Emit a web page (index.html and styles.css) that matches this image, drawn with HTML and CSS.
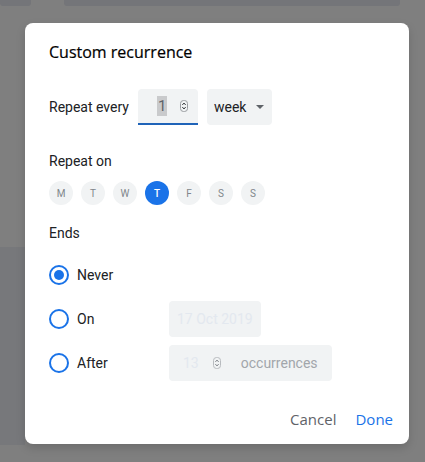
FILE: index.html
```html
<!DOCTYPE html>
<html lang="en">
  <head>
    <meta charset="UTF-8" />
    <meta name="viewport" content="width=device-width, initial-scale=1.0" />
    <title>Custom recurrence</title>
    <link rel="stylesheet" href="styles.css">
  </head>
  <body>
    <div class="topbars">
      <div class="bar bar-left"></div>
      <div class="bar bar-main"></div>
    </div>
    <div class="stage">
      <div class="side">
        <div class="side-block"></div>
      </div>
      <div class="dialog">
        <h2 class="title">Custom recurrence</h2>
        <div class="repeat-row">
          <span class="label">Repeat every</span>
          <div class="num-box">
            <span class="num-value">1</span>
            <svg class="spin" width="8" height="12" viewBox="0 0 8 12">
              <rect x="0.5" y="0.5" width="7" height="11" rx="3" fill="none" stroke="#9a9da1" stroke-width="1" />
              <path d="M2.3 5 L4 3 L5.7 5 M2.3 7 L4 9 L5.7 7" fill="none" stroke="#3c4043" stroke-width="1" />
            </svg>
          </div>
          <div class="select-box">
            <span>week</span>
            <span class="caret"></span>
          </div>
        </div>
        <div class="section-label repeat-on">Repeat on</div>
        <div class="days">
          <span class="day">M</span>
          <span class="day">T</span>
          <span class="day">W</span>
          <span class="day day-on">T</span>
          <span class="day">F</span>
          <span class="day">S</span>
          <span class="day">S</span>
        </div>
        <div class="section-label ends">Ends</div>
        <div class="end-options">
          <div class="end-row">
            <div class="radio-wrap">
              <svg width="20" height="20" viewBox="0 0 20 20">
                <circle cx="10" cy="10" r="9" fill="none" stroke="#1a73e8" stroke-width="2" />
                <circle cx="10" cy="10" r="5" fill="#1a73e8" />
              </svg>
              <span class="label">Never</span>
            </div>
          </div>
          <div class="end-row">
            <div class="radio-wrap">
              <svg width="20" height="20" viewBox="0 0 20 20">
                <circle cx="10" cy="10" r="9" fill="none" stroke="#1a73e8" stroke-width="2" />
              </svg>
              <span class="label">On</span>
            </div>
            <div class="field date-field">17 Oct 2019</div>
          </div>
          <div class="end-row">
            <div class="radio-wrap">
              <svg width="20" height="20" viewBox="0 0 20 20">
                <circle cx="10" cy="10" r="9" fill="none" stroke="#1a73e8" stroke-width="2" />
              </svg>
              <span class="label">After</span>
            </div>
            <div class="field count-field">
              <span class="count-value">13</span>
              <svg class="spin" width="8" height="12" viewBox="0 0 8 12">
                <rect x="0.5" y="0.5" width="7" height="11" rx="3" fill="none" stroke="#b8bbbf" stroke-width="1" />
                <path d="M2.3 5 L4 3 L5.7 5 M2.3 7 L4 9 L5.7 7" fill="none" stroke="#8a8e93" stroke-width="1" />
              </svg>
              <span class="count-unit">occurrences</span>
            </div>
          </div>
        </div>
        <div class="actions">
          <button class="btn btn-cancel">Cancel</button>
          <button class="btn btn-done">Done</button>
        </div>
      </div>
    </div>
  </body>
</html>
```
FILE: styles.css
```css
body {
  margin: 0;
  height: 462px;
  overflow: hidden;
  background-color: #7f7f7f;
  font-family: Roboto, "Liberation Sans", sans-serif;
  color: #202124;
}
.topbars {
  display: flex;
  height: 6px;
}
.bar {
  background-color: #747579;
  border-radius: 0 0 3px 3px;
}
.bar-left {
  width: 31px;
}
.bar-main {
  width: 336px;
  margin-left: 33px;
}
.stage {
  display: flex;
}
.side {
  width: 25px;
  padding-top: 241px;
}
.side-block {
  height: 198px;
  background-color: #77787b;
}
.dialog {
  width: 384px;
  height: 421px;
  box-sizing: border-box;
  margin-top: 17px;
  padding: 17px 24px 7px;
  background-color: #fff;
  border-radius: 8px;
  box-shadow: 0 4px 10px rgba(0, 0, 0, 0.15);
  display: flex;
  flex-direction: column;
}
.title {
  margin: 0 0 25px;
  font-family: "Open Sans", Roboto, sans-serif;
  font-size: 16px;
  line-height: 24px;
  font-weight: 500;
  color: #000;
  -webkit-text-stroke: 0.2px #000;
}
.label {
  font-size: 14px;
  line-height: 20px;
  color: #202124;
}
.repeat-row {
  display: flex;
  align-items: center;
}
.repeat-row .label {
  margin-right: 9px;
}
.num-box {
  width: 60px;
  height: 36px;
  box-sizing: border-box;
  padding-left: 19px;
  display: flex;
  align-items: center;
  background-color: #f1f3f4;
  border-bottom: 2px solid #1f63b8;
  border-radius: 4px 4px 0 0;
}
.num-value {
  font-size: 15px;
  line-height: 20px;
  padding: 0 1px;
  background-color: #c9cacc;
  color: #5f6368;
}
.num-box .spin {
  margin-left: 13px;
}
.select-box {
  width: 65px;
  height: 36px;
  box-sizing: border-box;
  margin-left: 9px;
  padding-left: 7px;
  display: flex;
  align-items: center;
  background-color: #f1f3f4;
  border-radius: 4px;
  font-size: 14px;
  color: #202124;
}
.caret {
  margin-left: 10px;
  width: 0;
  height: 0;
  border-left: 4px solid transparent;
  border-right: 4px solid transparent;
  border-top: 4px solid #5f6368;
}
.section-label {
  font-size: 14px;
  line-height: 20px;
  color: #202124;
}
.repeat-on {
  margin-top: 26px;
}
.days {
  display: flex;
  gap: 8px;
  margin-top: 10px;
}
.day {
  width: 24px;
  height: 24px;
  border-radius: 50%;
  background-color: #f1f3f4;
  color: #80868b;
  font-size: 10px;
  display: flex;
  align-items: center;
  justify-content: center;
}
.day-on {
  background-color: #1a73e8;
  color: #fff;
  font-weight: 500;
}
.ends {
  margin-top: 18px;
}
.end-options {
  margin-top: 14px;
  display: flex;
  flex-direction: column;
  gap: 8px;
}
.end-row {
  display: flex;
  align-items: center;
  height: 36px;
}
.radio-wrap {
  width: 120px;
  display: flex;
  align-items: center;
  gap: 8px;
}
.radio-wrap svg {
  display: block;
}
.field {
  height: 36px;
  box-sizing: border-box;
  display: flex;
  align-items: center;
  background-color: #f1f3f4;
  border-radius: 4px;
  font-size: 14px;
}
.date-field {
  width: 92px;
  padding-left: 8px;
  color: #e3e8ef;
}
.count-field {
  width: 163px;
  padding-left: 14px;
}
.count-value {
  color: #e3e8ef;
}
.count-field .spin {
  margin-left: 14px;
}
.count-unit {
  margin-left: 20px;
  color: #a2a6ab;
}
.actions {
  margin-top: auto;
  margin-right: -16px;
  display: flex;
  justify-content: flex-end;
  gap: 3px;
}
.btn {
  height: 36px;
  padding: 0 8px;
  border: none;
  background: none;
  font-family: "Open Sans", Roboto, sans-serif;
  font-size: 15px;
  font-weight: 500;
  cursor: pointer;
}
.btn-cancel {
  color: #5f6368;
}
.btn-done {
  color: #1a73e8;
}
```
